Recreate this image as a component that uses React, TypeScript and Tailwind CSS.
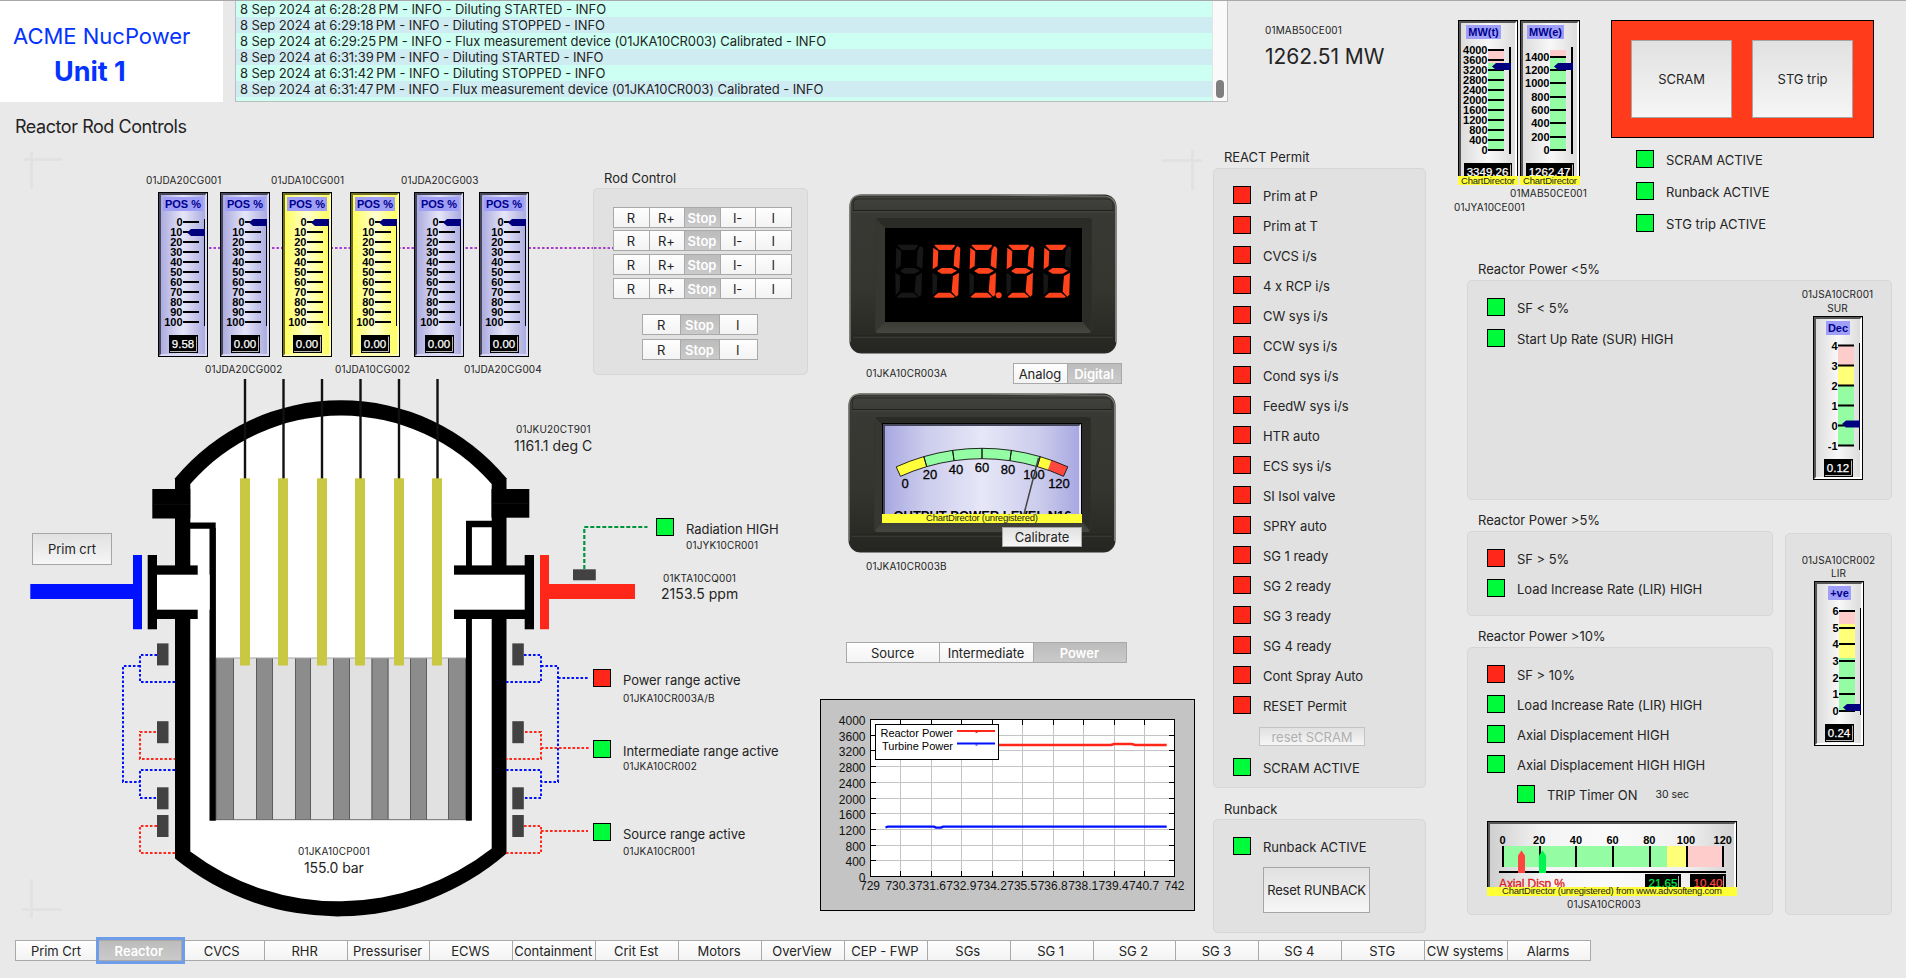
import React from "react";

/* ---------- shared pieces ---------- */

type Tone = "red" | "green";

function Lamp({ tone, className = "" }: { tone: Tone; className?: string }) {
  return (
    <span
      className={`block h-[18px] w-[18px] shrink-0 border border-black ${tone === "red" ? "bg-[#ff2719]" : "bg-[#00fb3b]"} ${className}`}
    />
  );
}

function Indicator({ tone, label, className = "h-[30px]" }: { tone: Tone; label: string; className?: string }) {
  return (
    <div className={`flex items-center gap-3 ${className}`}>
      <Lamp tone={tone} />
      <span className="pt-[2px] text-[13px] leading-4 whitespace-nowrap">{label}</span>
    </div>
  );
}

function Tag({ children, className = "" }: { children: React.ReactNode; className?: string }) {
  return <span className={`block text-[10px] leading-5 tracking-[0.15px] whitespace-nowrap ${className}`}>{children}</span>;
}

function PushButton({ children, className = "" }: { children: React.ReactNode; className?: string }) {
  return (
    <button
      className={`flex items-center justify-center border border-[#a6a6a6] bg-linear-to-b from-[#e1e1e1] to-[#f6f6f6] text-[13px] leading-4 whitespace-nowrap ${className}`}
    >
      {children}
    </button>
  );
}

function Segmented({ items, active, className = "" }: { items: string[]; active: string; className?: string }) {
  return (
    <div className={`flex h-[21px] divide-x divide-[#a9a9a9] border border-[#a9a9a9] ${className}`}>
      {items.map((t) => (
        <button
          key={t}
          className={`flex min-w-0 flex-1 items-center justify-center pr-px text-[13px] leading-4 whitespace-nowrap ${
            t === active
              ? "bg-linear-to-b from-[#bcbcbc] to-[#cacaca] font-semibold text-white"
              : "bg-linear-to-b from-[#fefefe] to-[#f3f3f3]"
          }`}
        >
          {t}
        </button>
      ))}
    </div>
  );
}

function Group({
  title,
  children,
  className = "",
  titleClass = "h-5",
}: {
  title?: string;
  children?: React.ReactNode;
  className?: string;
  titleClass?: string;
}) {
  return (
    <section>
      {title && <h3 className={`pl-[11px] text-[13px] leading-5 ${titleClass}`}>{title}</h3>}
      <div className={`rounded-[5px] border border-[#d6d6d6] bg-[#e1e1e1] ${className}`}>{children}</div>
    </section>
  );
}

/* ---------- vertical gauge ---------- */

type GaugeProps = {
  id: string;
  w?: number;
  h?: number;
  look?: "blue" | "yellow" | "silver";
  title: string;
  titleBox: [number, number];
  ticks: [number, string][];
  tickX?: [number, number];
  bands?: [number, number, string][];
  axisX?: number;
  axisW?: number;
  pointer: number;
  value: string;
  readout?: [number, number];
  branded?: boolean;
};

const looks = {
  blue: { mid: "#e6e6f8", edge: "#ababe0", dark: "#47475a", light: "#d9d9f6" },
  yellow: { mid: "#ffffd2", edge: "#ffff5c", dark: "#6e6e22", light: "#ffffb4" },
  silver: { mid: "#f8f8f8", edge: "#dcdcdc", dark: "#555555", light: "#ffffff" },
};

const PINK = "#ffcccc";
const YELLOW = "#ffff78";
const GREEN = "#94fda4";

function Gauge({
  id,
  w = 50,
  h = 165,
  look = "silver",
  title,
  titleBox,
  ticks,
  tickX = [25, 41],
  bands = [],
  axisX = 46,
  axisW = 1,
  pointer,
  value,
  readout = [11, 29],
  branded,
}: GaugeProps) {
  const c = looks[look];
  const tip = axisX - 17;
  const end = axisX + axisW;
  return (
    <svg width={w} height={h} viewBox={`0 0 ${w} ${h}`} className="block shrink-0 tracking-normal font-['Liberation_Sans',sans-serif]">
      <defs>
        <linearGradient id={id} x1="0" x2="1" y1="0" y2="0">
          <stop offset="0" stopColor={c.edge} />
          <stop offset="0.5" stopColor={c.mid} />
          <stop offset="1" stopColor={c.edge} />
        </linearGradient>
      </defs>
      <rect width={w} height={h} fill="#000" />
      <rect x="1" y="1" width={w - 2} height={h - 2} fill={c.light} />
      <path d={`M1 1H${w - 1}L${w - 3} 3H3V${h - 3}L1 ${h - 1}Z`} fill={c.dark} />
      <rect x="3" y="3" width={w - 6} height={h - 6} fill={`url(#${id})`} />
      <rect x={titleBox[0]} y="5" width={titleBox[1] - titleBox[0]} height="14" fill="#9f9ff8" />
      <text x={(titleBox[0] + titleBox[1]) / 2} y="16" fontSize="11" fontWeight="bold" fill="#00008c" textAnchor="middle">
        {title}
      </text>
      {bands.map(([a, b, f]) => (
        <rect key={a} x={tickX[0]} y={a} width={tickX[1] - tickX[0]} height={b - a} fill={f} />
      ))}
      {ticks.map(([y, t]) => (
        <g key={t}>
          <rect x={tickX[0]} y={y - 1} width={tickX[1] - tickX[0]} height="2" />
          <text x={tickX[0] - 0.5} y={y + 4} fontSize="11" fontWeight="bold" textAnchor="end">
            {t}
          </text>
        </g>
      ))}
      <rect x={axisX} y="27" width={axisW} height="107" />
      <path
        d={`M${tip} ${pointer}L${tip + 4} ${pointer - 3.5}H${end}V${pointer + 3.5}H${tip + 4}Z`}
        fill="#00007f"
      />
      <rect x={readout[0]} y="143" width={readout[1]} height="18" fill="#000" />
      <path d={`M${readout[0] + readout[1] - 1.5} 144.5V159.5H${readout[0] + 1}`} fill="none" stroke="#b5b5b5" strokeWidth="1" />
      <text
        x={readout[0] + readout[1] / 2 - 0.5}
        y="156"
        fontSize="11.5"
        fill="#fff"
        stroke="#fff"
        strokeWidth="0.25"
        textAnchor="middle"
      >
        {value}
      </text>
      {branded && (
        <g>
          <rect y="156" width={w} height="9" fill="#ffff37" />
          <text x={w / 2} y="163.5" fontSize="9.5" textAnchor="middle" textLength="54" fill="#222">
            ChartDirector
          </text>
        </g>
      )}
    </svg>
  );
}

const rodTicks: [number, string][] = [0, 10, 20, 30, 40, 50, 60, 70, 80, 90, 100].map((v) => [30 + v, String(v)]);

function RodGauge({ id, look, pointer = 30.5, value = "0.00" }: { id: string; look: "blue" | "yellow"; pointer?: number; value?: string }) {
  return <Gauge id={id} look={look} title="POS %" titleBox={[5, 45]} ticks={rodTicks} pointer={pointer} value={value} />;
}

/* ---------- panel meters ---------- */

function MeterCase({ children }: { children: React.ReactNode }) {
  return (
    <svg width="268" height="160" viewBox="0 0 268 160" className="block tracking-normal font-['Liberation_Sans',sans-serif]">
      <defs>
        <linearGradient id="caseBody" x1="0" x2="0" y1="0" y2="1">
          <stop offset="0" stopColor="#42433e" />
          <stop offset="0.12" stopColor="#383934" />
          <stop offset="0.6" stopColor="#34352f" />
          <stop offset="1" stopColor="#252621" />
        </linearGradient>
        <linearGradient id="caseLip" x1="0" x2="0" y1="0" y2="1">
          <stop offset="0" stopColor="#2a2b27" />
          <stop offset="0.8" stopColor="#2f302b" />
          <stop offset="1" stopColor="#45463f" />
        </linearGradient>
      </defs>
      <rect x="0.5" y="0.5" width="267" height="159" rx="12" fill="#2b2c28" />
      <path d="M1 148V13Q1 1 13 1H140L255 2.5Q266.500 3 266.500 14V148" fill="none" stroke="#7d7e78" strokeWidth="1.4" />
      <rect x="2" y="2.500" width="264" height="156" rx="11" fill="url(#caseBody)" />
      <path d="M4.500 16V8Q5 5 9 5H258Q263 5 264 10V17" fill="none" stroke="#2a2b27" strokeWidth="1" />
      <path d="M4 16.500H264M4 142H264" stroke="#20211d" strokeWidth="1" />
      <path d="M4 17.800H264M4 143.200H264" stroke="#4a4b45" strokeWidth="0.7" />
      <rect x="26.500" y="24" width="216" height="115" rx="3" fill="url(#caseLip)" />
      <path d="M26.500 24L36 34V127L26.500 138.500Z" fill="#363731" />
      <path d="M242.500 24L233 34V127L242.500 138.500Z" fill="#2b2c28" />
      {children}
    </svg>
  );
}

const segments: Record<string, string> = {
  a: "6,2 10,0 66,0 69,3 57,16 20,16",
  b: "74,5 80,6 84,12 81,72 64,63 67,18",
  c: "80,84 78,150 72,156 58,141 62,94",
  d: "4,156 18,144 54,144 68,156 64,159 8,159",
  e: "0,84 15,93 13,140 1,152",
  f: "3,9 18,20 16,64 1,74",
  g: "14,79 28,70 58,70 74,78 58,87 28,87",
};
const digitMap: Record<string, string> = { "9": "abcdfg", "5": "acdfg", " ": "" };

function DigitalMeter() {
  return (
    <MeterCase>
      <rect x="36" y="34" width="197" height="94" fill="#000" />
      {[" ", "9", "9", "9", "5"].map((d, i) => (
        <g key={i} transform={`translate(${46.3 + i * 37} 50.7) scale(0.3333)`}>
          {Object.keys(segments).map((s) => (
            <polygon key={s} points={segments[s]} fill={digitMap[d].includes(s) ? "#ff431c" : "#171717"} />
          ))}
        </g>
      ))}
      <circle cx="149.700" cy="101.200" r="3" fill="#ff431c" />
    </MeterCase>
  );
}

function arcPath(from: number, to: number) {
  const pt = (v: number, r: number) => {
    const t = (((v - 60) / 60) * 24.4 * Math.PI) / 180;
    return `${(100 + r * Math.sin(t)).toFixed(2)} ${(233 - r * Math.cos(t)).toFixed(2)}`;
  };
  return `M${pt(from, 207.7)}A207.7 207.7 0 0 1 ${pt(to, 207.7)}L${pt(to, 197.3)}A197.3 197.3 0 0 0 ${pt(from, 197.3)}Z`;
}

function AnalogMeter() {
  return (
    <MeterCase>
      <defs>
        <linearGradient id="dialFace" x1="0" x2="1" y1="0" y2="0">
          <stop offset="0" stopColor="#a8a8e2" />
          <stop offset="0.2" stopColor="#cbcbec" />
          <stop offset="0.5" stopColor="#e7e7f8" />
          <stop offset="0.8" stopColor="#cbcbec" />
          <stop offset="1" stopColor="#a8a8e2" />
        </linearGradient>
      </defs>
      <g transform="translate(34 30)">
        <rect width="200" height="100" fill="#000" />
        <rect x="1" y="1" width="198" height="99" fill="#e4e4fa" />
        <path d="M1 1H199L197 3H3V100H1Z" fill="#47475a" />
        <rect x="3" y="3" width="194" height="97" fill="url(#dialFace)" />
        <path d={arcPath(0, 20)} fill="#ffff3c" />
        <path d={arcPath(20, 100)} fill={GREEN} />
        <path d={arcPath(100, 108)} fill="#ffff3c" />
        <path d={arcPath(108, 120)} fill="#ff4740" />
        {[0, 20, 40, 60, 80, 100].map((v) => (
          <path key={v} d={arcPath(v, v + 20)} fill="none" stroke="#111" strokeWidth="0.9" />
        ))}
        {(
          [
            ["0", 23, 65],
            ["20", 48, 56],
            ["40", 74, 51],
            ["60", 100, 49],
            ["80", 126, 51],
            ["100", 152, 56],
            ["120", 177, 65],
          ] as [string, number, number][]
        ).map(([t, x, y]) => (
          <text key={t} x={x} y={y} fontSize="13" textAnchor="middle" stroke="#000" strokeWidth="0.300">
            {t}
          </text>
        ))}
        <path d="M156.500 35L142 91" stroke="#444" strokeWidth="1.500" />
        <text x="100.500" y="96.500" fontSize="13" fontWeight="bold" textAnchor="middle" textLength="178">
          OUTPUT POWER LEVEL N16
        </text>
        <rect y="91" width="200" height="9" fill="#ffff37" />
        <text x="100" y="98.300" fontSize="9.500" textAnchor="middle" textLength="112" fill="#222">
          ChartDirector (unregistered)
        </text>
      </g>
    </MeterCase>
  );
}

/* ---------- axial displacement gauge ---------- */

function AxialGauge() {
  return (
    <svg width="250" height="75" viewBox="0 0 250 75" className="block tracking-normal font-['Liberation_Sans',sans-serif]">
      <defs>
        <linearGradient id="axialFace" x1="0" x2="1" y1="0" y2="0">
          <stop offset="0" stopColor="#cfcfcf" />
          <stop offset="0.22" stopColor="#f4f4f4" />
          <stop offset="0.5" stopColor="#fafafa" />
          <stop offset="0.8" stopColor="#f0f0f0" />
          <stop offset="1" stopColor="#d2d2d2" />
        </linearGradient>
      </defs>
      <rect width="250" height="75" fill="#000" />
      <rect x="1" y="1" width="248" height="74" fill="#fff" />
      <path d="M1 1H249L247 3H3V75H1Z" fill="#555" />
      <rect x="3" y="3" width="244" height="72" fill="url(#axialFace)" />
      <rect x="16" y="25" width="165" height="21" fill={GREEN} />
      <rect x="180" y="25" width="19" height="21" fill={YELLOW} />
      <rect x="199" y="25" width="37" height="21" fill={PINK} />
      {[0, 20, 40, 60, 80, 100, 120].map((v) => (
        <g key={v}>
          <rect x={15 + Math.round(v * 1.835)} y="25" width="2" height="21" />
          <text x={15.5 + v * 1.835} y="23.200" fontSize="11" fontWeight="bold" textAnchor="middle">
            {v}
          </text>
        </g>
      ))}
      <rect x="12" y="50" width="227" height="2" />
      <path d="M34.500 29.500L38 34.500V52H31V34.500Z" fill="#ff4740" />
      <path d="M55.500 29.500L59 34.500V52H52V34.500Z" fill="#00f550" />
      <text x="12" y="66.500" fontSize="12" textLength="66" fill="#e01818" stroke="#e01818" strokeWidth="0.300">
        Axial Disp %
      </text>
      <rect x="158" y="53" width="36" height="16" fill="#000" />
      <rect x="203" y="53" width="36" height="16" fill="#000" />
      <path d="M191.500 55V68M236.500 55V68" stroke="#aaa" />
      <text x="176" y="66" fontSize="11.500" fill="#00e648" stroke="#00e648" strokeWidth="0.250" textAnchor="middle">
        21.65
      </text>
      <text x="221" y="66" fontSize="11.500" fill="#ff4740" stroke="#ff4740" strokeWidth="0.250" textAnchor="middle">
        10.40
      </text>
      <rect y="66" width="250" height="9" fill="#ffff37" />
      <text x="125" y="73.300" fontSize="9.500" textAnchor="middle" textLength="220" fill="#222">
        ChartDirector (unregistered) from www.advsofteng.com
      </text>
    </svg>
  );
}

/* ---------- power trend ---------- */

function TrendChart() {
  const xs = ["729", "730.3", "731.6", "732.9", "734.2", "735.5", "736.8", "738.1", "739.4", "740.7", "742"];
  const gx = (i: number) => Math.round(50 + i * 30.45) + 0.5;
  const gy = (i: number) => Math.round(20 + i * 15.7) + 0.5;
  return (
    <svg width="375" height="212" viewBox="0 0 375 212" className="block tracking-normal font-['Liberation_Sans',sans-serif]">
      <rect x="0.5" y="0.5" width="374" height="211" fill="#c4c4c4" stroke="#000" />
      <rect x="50.500" y="20.500" width="304" height="157" fill="#fff" />
      {xs.map((t, i) => (
        <g key={t}>
          {i > 0 && i < 10 && <path d={`M${gx(i)} 20.5V177.5`} stroke="#c4c4c4" />}
          {i > 0 && i < 10 && <path d={`M${gx(i)} 20.5V26M${gx(i)} 172V177.5`} stroke="#000" />}
          <text x={50 + i * 30.45} y="191" fontSize="12" textAnchor="middle" fill="#111">
            {t}
          </text>
        </g>
      ))}
      {xs.map((_, i) => (
        <g key={i}>
          {i > 0 && i < 10 && <path d={`M50.5 ${gy(i)}H354.5`} stroke="#c4c4c4" />}
          {i > 0 && i < 10 && <path d={`M50.5 ${gy(i)}H56M349 ${gy(i)}H354.5`} stroke="#000" />}
          <text x="45.500" y={gy(i) + 5.5} fontSize="12" textAnchor="end" fill="#111">
            {4000 - i * 400}
          </text>
        </g>
      ))}
      <rect x="50.500" y="20.500" width="304" height="157" fill="none" stroke="#000" />
      <path d="M170 46H291L294 45H312L315 46H346.700" fill="none" stroke="#ff2719" strokeWidth="2.400" />
      <path d="M65.500 128.300L68 127.600H114L116 128.600H121L123 127.600H346.700" fill="none" stroke="#0011ff" strokeWidth="2.400" />
      <rect x="55.500" y="25.500" width="123" height="35" fill="#fff" stroke="#000" />
      <text x="133" y="38" fontSize="11" textAnchor="end" textLength="72.500">
        Reactor Power
      </text>
      <text x="133" y="51" fontSize="11" textAnchor="end" textLength="71">
        Turbine Power
      </text>
      <path d="M137 32H175" stroke="#ff2719" strokeWidth="1.800" />
      <path d="M137 44.500H175" stroke="#0011ff" strokeWidth="1.800" />
      <path d="M155.500 33.500h2" stroke="#ff2719" />
      <path d="M155.500 46h2" stroke="#0011ff" />
    </svg>
  );
}

/* ---------- reactor mimic ---------- */

function ReactorDrawing() {
  const stems = [245, 283.5, 322, 360.5, 399, 437.5];
  const fuel: [number, number][] = [
    [215.5, 18.5],
    [256, 17],
    [295, 16],
    [333, 17],
    [371.5, 17],
    [410, 17],
    [448, 18],
  ];
  return (
    <svg width="820" height="838" viewBox="0 102 820 838" className="block">
      {/* alignment marks */}
      <g fill="#e2e2e2">
        <rect x="24" y="158" width="38" height="3" />
        <rect x="30" y="152" width="3" height="37" />
        <rect x="22" y="908" width="40" height="3" />
        <rect x="30" y="879" width="3" height="39" />
      </g>
      <path d="M209 248H594" stroke="#a83fce" strokeWidth="2" strokeDasharray="2.5 2" />

      {/* vessel */}
      <path
        d="M175 478.300A215 215 0 0 1 506.500 478.300V853.500A258 258 0 0 1 175 858.600Z"
        fill="#000"
      />
      <path
        d="M190.300 484A200 200 0 0 1 491.700 484V848.500A247 247 0 0 1 190.300 851.500Z"
        fill="#fff"
      />
      <rect x="152.300" y="489" width="38" height="29.500" />
      <rect x="491.500" y="489" width="37.800" height="28.700" />
      <path d="M152.500 504.300H190M491.500 503.300H528" stroke="#1c1c1c" strokeWidth="0.5" />

      {/* shroud */}
      <path d="M190 522.400H215.700V820.500H209.700V528.700H190Z" />
      <path d="M492 520.800H466V820.500H471.700V527.200H492Z" />

      {/* core */}
      <rect x="215.700" y="658" width="250.300" height="162" fill="#e1e1e1" />
      {fuel.map(([x, w]) => (
        <g key={x}>
          <rect x={x} y="658" width={w} height="162" fill="#8c8c8c" />
          <path d={`M${x + 0.5} 658V820M${x + w - 0.5} 658V820`} stroke="#5c5c5c" />
        </g>
      ))}
      <path d="M215.700 658H466" stroke="#a5a5a5" />
      <path d="M209.700 819.700H471" stroke="#6e6e6e" />
      <rect x="209.700" y="528" width="6" height="292.500" />
      <rect x="466" y="527" width="5.700" height="293.500" />

      {/* rods */}
      {stems.map((x, i) => (
        <g key={x}>
          <rect x={x - 1.2} y="379" width="2.4" height="100" fill="#111" />
          <rect x={[240, 278, 317, 355, 394, 432][i]} y="478.300" width="10" height="187.200" fill="#c9c843" />
        </g>
      ))}

      {/* nozzles */}
      <rect x="157" y="565.400" width="40.700" height="53.600" />
      <rect x="157" y="574.700" width="52.700" height="35" fill="#fff" />
      <rect x="147.700" y="555" width="9.300" height="74.300" />
      <rect x="454" y="565.400" width="71" height="53.600" />
      <rect x="454" y="574.700" width="71" height="35" fill="#fff" />
      <rect x="524.700" y="555" width="9.300" height="74.300" />
      <path d="M133 555H142V629.300H133V599H30.300V584H133Z" fill="#0011ff" />
      <path d="M540 555H549V584H635V599H549V629.300H540Z" fill="#ff2719" />

      {/* detectors */}
      <g fill="#424242">
        {[643.4, 721.2, 787.3, 815].map((y) => (
          <g key={y}>
            <rect x="157" y={y} width="11.500" height="22" />
            <rect x="512.300" y={y} width="11.500" height="22" />
          </g>
        ))}
        <rect x="573" y="569.300" width="22.800" height="11" />
      </g>
      <g fill="none" strokeWidth="2" strokeDasharray="2.600 1.900">
        <path stroke="#0011ff" d="M157 655H140V682H175M140 666H123V782H140M175 770H140V798H156" />
        <path stroke="#ff2719" d="M156 732H140V759H175M157 826H140V853H175" />
        <path stroke="#0011ff" d="M524 655H541V682H506M541 666H558V782H541M506 770H541V798H524M558 678H589" />
        <path stroke="#ff2719" d="M525 732H541V759H506M541 748H590M524 826H541V853H506M541 831H588" />
      </g>
      <path d="M584.300 569V527H647.500" fill="none" stroke="#00953b" strokeWidth="2.200" strokeDasharray="4 2" />
    </svg>
  );
}

function RodControl() {
  const five = ["R", "R+", "Stop", "I-", "I"];
  const three = ["R", "Stop", "I"];
  return (
    <Group title="Rod Control" className="h-[187px] pt-[18px] pl-[19px]">
      <Segmented items={five} active="Stop" className="w-[179px]" />
      <Segmented items={five} active="Stop" className="mt-[2px] w-[179px]" />
      <Segmented items={five} active="Stop" className="mt-[3px] w-[179px]" />
      <Segmented items={five} active="Stop" className="mt-[3px] w-[179px]" />
      <Segmented items={three} active="Stop" className="mt-[15px] ml-[29px] w-[116px]" />
      <Segmented items={three} active="Stop" className="mt-[4px] ml-[29px] w-[116px]" />
    </Group>
  );
}

function Mimic() {
  return (
    <div className="relative h-[838px] w-[820px] shrink-0">
      <ReactorDrawing />
      <h2 className="absolute top-[12px] left-[15px] text-[18px] leading-[26px] whitespace-nowrap tracking-[-0.45px]">Reactor Rod Controls</h2>

      <Tag className="absolute top-[68px] left-[146px]">01JDA20CG001</Tag>
      <Tag className="absolute top-[68px] left-[271px]">01JDA10CG001</Tag>
      <Tag className="absolute top-[68px] left-[401px]">01JDA20CG003</Tag>
      <div className="absolute top-[90px] left-[158px]"><RodGauge id="rod1" look="blue" pointer={40.5} value="9.58" /></div>
      <div className="absolute top-[90px] left-[220px]"><RodGauge id="rod2" look="blue" /></div>
      <div className="absolute top-[90px] left-[282px]"><RodGauge id="rod3" look="yellow" /></div>
      <div className="absolute top-[90px] left-[350px]"><RodGauge id="rod4" look="yellow" /></div>
      <div className="absolute top-[90px] left-[414px]"><RodGauge id="rod5" look="blue" /></div>
      <div className="absolute top-[90px] left-[479px]"><RodGauge id="rod6" look="blue" /></div>
      <Tag className="absolute top-[257px] left-[205px]">01JDA20CG002</Tag>
      <Tag className="absolute top-[257px] left-[335px]">01JDA10CG002</Tag>
      <Tag className="absolute top-[257px] left-[464px]">01JDA20CG004</Tag>

      <div className="absolute top-[66px] left-[593px] w-[215px]"><RodControl /></div>
      <svg width="20" height="2" viewBox="0 0 20 2" className="absolute top-[145px] left-[593px]">
        <path d="M1 1H20" stroke="#a83fce" strokeWidth="2" strokeDasharray="2.5 2" />
      </svg>

      <Tag className="absolute top-[317px] left-[516px]">01JKU20CT901</Tag>
      <span className="absolute top-[334px] left-[514px] text-[14px] leading-5 whitespace-nowrap tracking-[0.05px]">1161.1 deg C</span>

      <Lamp tone="green" className="absolute top-[416px] left-[656px]" />
      <span className="absolute top-[417px] left-[686px] text-[13px] leading-5 whitespace-nowrap">Radiation HIGH</span>
      <Tag className="absolute top-[433px] left-[686px]">01JYK10CR001</Tag>
      <Tag className="absolute top-[466px] left-[663px]">01KTA10CQ001</Tag>
      <span className="absolute top-[482px] left-[661px] text-[14px] leading-5 whitespace-nowrap tracking-[0.05px]">2153.5 ppm</span>

      <PushButton className="absolute top-[431px] left-[32px] h-[32px] w-[80px]">Prim crt</PushButton>

      <Lamp tone="red" className="absolute top-[567px] left-[593px]" />
      <span className="absolute top-[568px] left-[623px] text-[13px] leading-5 whitespace-nowrap">Power range active</span>
      <Tag className="absolute top-[586px] left-[623px]">01JKA10CR003A/B</Tag>
      <Lamp tone="green" className="absolute top-[638px] left-[593px]" />
      <span className="absolute top-[639px] left-[623px] text-[13px] leading-5 whitespace-nowrap">Intermediate range active</span>
      <Tag className="absolute top-[654px] left-[623px]">01JKA10CR002</Tag>
      <Lamp tone="green" className="absolute top-[721px] left-[593px]" />
      <span className="absolute top-[722px] left-[623px] text-[13px] leading-5 whitespace-nowrap">Source range active</span>
      <Tag className="absolute top-[739px] left-[623px]">01JKA10CR001</Tag>

      <Tag className="absolute top-[739px] left-[298px]">01JKA10CP001</Tag>
      <span className="absolute top-[756px] left-[304px] text-[14px] leading-5 whitespace-nowrap tracking-[-0.1px]">155.0 bar</span>
    </div>
  );
}

/* ---------- instrument column ---------- */

function Instruments() {
  return (
    <div className="relative w-[393px] shrink-0 pt-[92px]">
      <svg width="60" height="60" viewBox="0 0 60 60" className="absolute top-[40px] left-[335px]">
        <path d="M7 18.500H47M37.500 8V48" stroke="#e2e2e2" strokeWidth="3" />
      </svg>
      <div className="ml-[29px]"><DigitalMeter /></div>
      <div className="mt-[9px] ml-[46px] flex items-center">
        <Tag className="-mt-px w-[147px]">01JKA10CR003A</Tag>
        <Segmented items={["Analog", "Digital"]} active="Digital" className="w-[109px]" />
      </div>
      <div className="relative mt-[9px] ml-[28px] w-[268px]">
        <AnalogMeter />
        <PushButton className="absolute top-[134px] left-[154px] h-[20px] w-[80px]">Calibrate</PushButton>
      </div>
      <Tag className="mt-[3px] ml-[46px]">01JKA10CR003B</Tag>
      <Segmented items={["Source", "Intermediate", "Power"]} active="Power" className="mt-[66px] ml-[26px] w-[281px]" />
      <div className="mt-[36px]"><TrendChart /></div>
    </div>
  );
}

const permits = [
  "Prim at P", "Prim at T", "CVCS i/s", "4 x RCP i/s", "CW sys i/s", "CCW sys i/s", "Cond sys i/s", "FeedW sys i/s",
  "HTR auto", "ECS sys i/s", "SI Isol valve", "SPRY auto", "SG 1 ready", "SG 2 ready", "SG 3 ready", "SG 4 ready",
  "Cont Spray Auto", "RESET Permit",
];

function PermitColumn() {
  return (
    <div className="w-[213px] shrink-0 pt-[45px]">
      <Group title="REACT Permit" className="mt-px h-[620px] pt-[11px] pl-[19px]">
        {permits.map((p) => (
          <Indicator key={p} tone="red" label={p} />
        ))}
        <PushButton className="mt-[7px] ml-[26px] h-[19px] w-[106px] border-[#c3c3c3] text-[#b0b0b0]">reset SCRAM</PushButton>
        <Indicator tone="green" label="SCRAM ACTIVE" className="mt-[6px] h-[30px]" />
      </Group>
      <div className="mt-[11px]">
        <Group title="Runback" className="h-[114px] pt-[11px] pl-[19px]">
          <Indicator tone="green" label="Runback ACTIVE" />
          <PushButton className="mt-[6px] ml-[30px] h-[46px] w-[107px] tracking-[-0.2px]">Reset RUNBACK</PushButton>
        </Group>
      </div>
    </div>
  );
}

/* ---------- header ---------- */

const logRows = [
  "8 Sep 2024 at 6:28:28\u202fPM - INFO - Diluting STARTED - INFO",
  "8 Sep 2024 at 6:29:18\u202fPM - INFO - Diluting STOPPED - INFO",
  "8 Sep 2024 at 6:29:25\u202fPM - INFO - Flux measurement device (01JKA10CR003) Calibrated - INFO",
  "8 Sep 2024 at 6:31:39\u202fPM - INFO - Diluting STARTED - INFO",
  "8 Sep 2024 at 6:31:42\u202fPM - INFO - Diluting STOPPED - INFO",
  "8 Sep 2024 at 6:31:47\u202fPM - INFO - Flux measurement device (01JKA10CR003) Calibrated - INFO",
];

function Header() {
  return (
    <header className="flex h-[102px]">
      <div className="w-[223px] bg-white text-[#0433ff]">
        <div className="mt-[21px] pl-[13px] text-[22px] leading-[30px] tracking-normal whitespace-nowrap">ACME NucPower</div>
        <div className="mt-[5px] pl-[54px] text-[27px] leading-[32px] font-bold whitespace-nowrap">Unit 1</div>
      </div>
      <div className="ml-3 flex w-[993px] border border-t-0 border-[#bdbdbd] bg-[#cdfff3] pt-px">
        <div className="flex-1 overflow-hidden">
          {logRows.map((r, i) => (
            <div
              key={i}
              className={`h-4 pl-1 text-[13px] leading-[17px] tracking-[-0.08px] whitespace-nowrap ${i % 2 ? "bg-[#d0ecf3]" : "bg-[#cdfff3]"}`}
            >
              {r}
            </div>
          ))}
        </div>
        <div className="flex w-[15px] items-end justify-center border-l border-[#e4e4e4] bg-[#fafafa] pb-[3px]">
          <span className="h-[18px] w-2 rounded-full bg-[#7f7f7f]" />
        </div>
      </div>
      <div className="ml-[37px] pt-[20px]">
        <Tag>01MAB50CE001</Tag>
        <div className="mt-[4px] text-[21px] leading-[26px] whitespace-nowrap">1262.51 MW</div>
      </div>
    </header>
  );
}

/* ---------- right side ---------- */

function TripBlock() {
  return (
    <div className="flex h-[259px] pt-5 pl-[11px]">
      <div className="w-[153px]">
        <div className="flex gap-[2px]">
          <Gauge
            id="mwt" w={60} title="MW(t)" titleBox={[8, 43]} tickX={[30, 46]} axisX={51} axisW={2} pointer={46.5}
            ticks={[[30, "4000"], [40, "3600"], [50, "3200"], [60, "2800"], [70, "2400"], [80, "2000"], [90, "1600"], [100, "1200"], [110, "800"], [120, "400"], [130, "0"]]}
            bands={[[30, 43, PINK], [43, 130, GREEN]]} value="3349.26" readout={[6, 48]} branded
          />
          <Gauge
            id="mwe" w={60} title="MW(e)" titleBox={[7, 44]} tickX={[30, 46]} axisX={51} axisW={2} pointer={46.5}
            ticks={[[37, "1400"], [50, "1200"], [63, "1000"], [77, "800"], [90, "600"], [103, "400"], [117, "200"], [130, "0"]]}
            bands={[[30, 36.5, PINK], [36.5, 130, GREEN]]} value="1262.47" readout={[6, 48]} branded
          />
        </div>
        <Tag className="-mt-[2px] pl-[52px]">01MAB50CE001</Tag>
        <Tag className="-mt-[6px] -ml-[4px]">01JYA10CE001</Tag>
      </div>
      <div>
        <div className="flex h-[118px] w-[263px] gap-[20px] border border-black bg-[#ff3b1b] pt-[19px] pl-[19px]">
          <PushButton className="h-[78px] w-[101px]">SCRAM</PushButton>
          <PushButton className="h-[78px] w-[101px]">STG trip</PushButton>
        </div>
        <div className="mt-[5px] pl-[25px]">
          <Indicator tone="green" label="SCRAM ACTIVE" className="h-8" />
          <Indicator tone="green" label="Runback ACTIVE" className="h-8" />
          <Indicator tone="green" label="STG trip ACTIVE" className="h-8" />
        </div>
      </div>
    </div>
  );
}

function PowerPanels() {
  return (
    <div className="pl-5">
      <Group title="Reactor Power <5%" titleClass="h-[21px]" className="flex h-[220px] w-[425px] justify-between pl-[19px]">
        <div className="pt-[10px]">
          <Indicator tone="green" label="SF < 5%" className="h-[31px]" />
          <Indicator tone="green" label="Start Up Rate (SUR) HIGH" className="h-[31px]" />
        </div>
        <div className="flex w-[107px] flex-col items-center pt-[3px]">
          <Tag>01JSA10CR001</Tag>
          <Tag className="-mt-[6px] mb-[-2px]">SUR</Tag>
          <Gauge
            id="sur" h={164} title="Dec" titleBox={[13, 37]} tickX={[25, 41]}
            ticks={[[29.5, "4"], [49.5, "3"], [69.5, "2"], [89.5, "1"], [109.5, "0"], [129.5, "-1"]]}
            bands={[[29.5, 49.5, PINK], [49.5, 69.5, YELLOW], [69.5, 129.5, GREEN]]} pointer={108} value="0.12"
          />
        </div>
      </Group>
      <div className="flex">
        <div className="w-[306px] pt-[10px]">
          <Group title="Reactor Power >5%" titleClass="h-[21px]" className="h-[85px] pt-[11px] pl-[19px]">
            <Indicator tone="red" label="SF > 5%" />
            <Indicator tone="green" label="Load Increase Rate (LIR) HIGH" />
          </Group>
          <div className="mt-[10px]">
            <Group title="Reactor Power >10%" titleClass="h-[21px]" className="h-[268px] pt-[11px] pl-[19px]">
              <Indicator tone="red" label="SF > 10%" />
              <Indicator tone="green" label="Load Increase Rate (LIR) HIGH" />
              <Indicator tone="green" label="Axial Displacement HIGH" />
              <Indicator tone="green" label="Axial Displacement HIGH HIGH" />
              <div className="flex items-center gap-[18px] pl-[30px]">
                <Indicator tone="green" label="TRIP Timer ON" />
                <span className="pt-[2px] text-[10.5px] leading-4">30 sec</span>
              </div>
              <div className="mt-[12px]"><AxialGauge /></div>
              <Tag className="-mt-[2px] pl-[80px]">01JSA10CR003</Tag>
            </Group>
          </div>
        </div>
        <div className="ml-3 w-[107px] pt-[33px]">
          <Group className="flex h-[382px] flex-col items-center pt-[16px]">
            <Tag>01JSA10CR002</Tag>
            <Tag className="-mt-[7px] mb-[-2px]">LIR</Tag>
            <Gauge
              id="lir" title="+ve" titleBox={[14, 37]} tickX={[25, 41]}
              ticks={[[30, "6"], [47, "5"], [63, "4"], [80, "3"], [97, "2"], [113, "1"], [130, "0"]]}
              bands={[[30, 43, PINK], [43, 77, YELLOW], [77, 130, GREEN]]} pointer={126.5} value="0.24"
            />
          </Group>
        </div>
      </div>
    </div>
  );
}

/* ---------- navigation ---------- */

const tabs = [
  "Prim Crt", "Reactor", "CVCS", "RHR", "Pressuriser", "ECWS", "Containment", "Crit Est", "Motors", "OverView",
  "CEP - FWP", "SGs", "SG 1", "SG 2", "SG 3", "SG 4", "STG", "CW systems", "Alarms",
];

function Tabs() {
  return (
    <nav className="ml-[15px] flex h-[21px] w-[1576px] border-l border-[#a9a9a9]">
      {tabs.map((t) => (
        <button
          key={t}
          className={`flex min-w-0 flex-1 items-center justify-center border-y border-r border-[#a9a9a9] pr-[2px] text-[13px] leading-4 whitespace-nowrap ${
            t === "Reactor"
              ? "relative z-10 bg-linear-to-b from-[#bcbcbc] to-[#cacaca] font-semibold text-white ring-3 ring-[#6f9de8]"
              : "bg-linear-to-b from-[#fefefe] to-[#f3f3f3]"
          }`}
        >
          {t}
        </button>
      ))}
    </nav>
  );
}

export default function App() {
  return (
    <div className="relative h-[978px] w-[1906px] overflow-hidden bg-[#e9e9e9] font-[Inter,sans-serif] tracking-[-0.04px] text-[#242424]">
      <div className="flex h-[940px]">
        <div className="w-[1447px] shrink-0">
          <Header />
          <div className="flex">
            <Mimic />
            <Instruments />
            <PermitColumn />
          </div>
        </div>
        <div className="w-[459px]">
          <TripBlock />
          <PowerPanels />
        </div>
      </div>
      <Tabs />
      <div className="absolute inset-x-0 top-0 h-px bg-[#a8a8a8]" />
    </div>
  );
}
